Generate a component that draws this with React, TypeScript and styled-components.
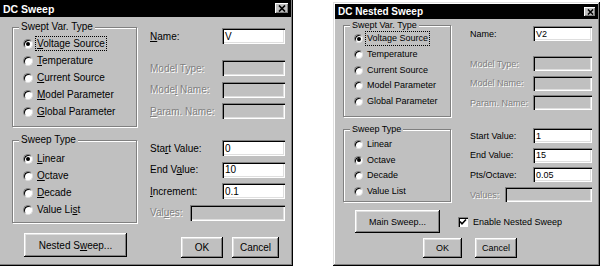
import React from 'react';
import styled, { createGlobalStyle, css } from 'styled-components';

const Global = createGlobalStyle`
  html, body { margin: 0; padding: 0; background: #fff; }
  body { width: 600px; height: 269px; overflow: hidden; font-family: "Liberation Sans", Arial, sans-serif; }
`;

const Page = styled.div`
  display: flex;
  align-items: flex-start;
  width: 600px;
  height: 269px;
  background: #fff;
  overflow: hidden;
`;

const Window = styled.div<{ $w: number; $h: number; $mt: number; $ml: number; $fs: number }>`
  flex: none;
  width: ${p => p.$w}px;
  height: ${p => p.$h}px;
  margin-top: ${p => p.$mt}px;
  margin-left: ${p => p.$ml}px;
  box-sizing: border-box;
  padding: 2px;
  background: #c0c0c0;
  box-shadow: inset -1px -1px #000, inset 1px 1px #dfdfdf, inset -2px -2px #808080, inset 2px 2px #fff;
  display: flex;
  flex-direction: column;
  font-size: ${p => p.$fs}px;
  color: #000;
`;

const TitleBar = styled.div<{ $h: number; $fs: number }>`
  flex: none;
  height: ${p => p.$h}px;
  background: #000;
  color: #fff;
  font-weight: bold;
  font-size: ${p => p.$fs}px;
  display: flex;
  align-items: center;
  justify-content: space-between;
  padding: 0 2px 0 3px;
`;

const CloseBtn = styled.div<{ $w: number; $h: number }>`
  width: ${p => p.$w}px;
  height: ${p => p.$h}px;
  background: #c0c0c0;
  box-shadow: inset -1px -1px #000, inset 1px 1px #fff, inset -2px -2px #808080;
  display: flex;
  align-items: center;
  justify-content: center;
`;

const Body = styled.div`
  display: flex;
  align-items: flex-start;
`;

const Column = styled.div<{ $w: number; $pl?: number; $pt?: number; $ml?: number }>`
  flex: none;
  width: ${p => p.$w}px;
  padding-left: ${p => p.$pl ?? 0}px;
  padding-top: ${p => p.$pt ?? 0}px;
  margin-left: ${p => p.$ml ?? 0}px;
  display: flex;
  flex-direction: column;
`;

const Group = styled.div<{ $h: number; $mt: number; $pt: number; $pl: number }>`
  position: relative;
  box-sizing: border-box;
  height: ${p => p.$h}px;
  margin-top: ${p => p.$mt}px;
  padding-top: ${p => p.$pt}px;
  padding-left: ${p => p.$pl}px;
  border: 1px solid #808080;
  box-shadow: inset 1px 1px #fff, 1px 1px #fff;
  display: flex;
  flex-direction: column;
`;

const Legend = styled.span`
  position: absolute;
  top: -7px;
  left: 6px;
  padding: 0 2px;
  background: #c0c0c0;
  line-height: 12px;
`;

const RadioRow = styled.div<{ $h: number; $gap: number }>`
  height: ${p => p.$h}px;
  display: flex;
  align-items: center;
  gap: ${p => p.$gap}px;
`;

const RadioCircle = styled.span<{ $d: number; $on?: boolean }>`
  position: relative;
  flex: none;
  box-sizing: border-box;
  width: ${p => p.$d}px;
  height: ${p => p.$d}px;
  border-radius: 50%;
  background: #fff;
  border: 1px solid;
  border-color: #808080 #dfdfdf #dfdfdf #808080;
  box-shadow: inset 1px 1px #000;
  ${p =>
    p.$on &&
    css`
      &::after {
        content: '';
        position: absolute;
        left: 50%;
        top: 50%;
        width: 4px;
        height: 4px;
        margin: -2px 0 0 -2px;
        border-radius: 50%;
        background: #000;
      }
    `}
`;

const Text = styled.span<{ $focus?: boolean }>`
  white-space: nowrap;
  padding: 0 1px;
  line-height: 13px;
  ${p =>
    p.$focus &&
    css`
      outline: 1px dotted #000;
      outline-offset: 0px;
    `}
`;

const FieldGroup = styled.div<{ $gap: number; $mt: number }>`
  display: flex;
  flex-direction: column;
  gap: ${p => p.$gap}px;
  margin-top: ${p => p.$mt}px;
`;

const Field = styled.div<{ $h: number }>`
  display: flex;
  align-items: center;
  height: ${p => p.$h}px;
`;

const Label = styled.span<{ $w: number; $disabled?: boolean }>`
  flex: none;
  width: ${p => p.$w}px;
  white-space: nowrap;
  color: ${p => (p.$disabled ? '#808080' : '#000')};
  text-shadow: ${p => (p.$disabled ? '1px 1px 0 #fff' : 'none')};
`;

const Input = styled.div<{ $w: number; $disabled?: boolean }>`
  flex: none;
  box-sizing: border-box;
  width: ${p => p.$w}px;
  height: 100%;
  padding-left: 3px;
  display: flex;
  align-items: center;
  background: ${p => (p.$disabled ? '#c0c0c0' : '#fff')};
  box-shadow: inset 1px 1px #808080, inset 2px 2px #000, inset -1px -1px #fff, inset -2px -2px #dfdfdf;
`;

const ButtonRow = styled.div<{ $mt: number; $pl: number; $gap: number }>`
  display: flex;
  align-items: center;
  margin-top: ${p => p.$mt}px;
  padding-left: ${p => p.$pl}px;
  gap: ${p => p.$gap}px;
`;

const Button = styled.div<{ $w: number; $h: number }>`
  flex: none;
  box-sizing: border-box;
  width: ${p => p.$w}px;
  height: ${p => p.$h}px;
  background: #c0c0c0;
  box-shadow: inset -1px -1px #000, inset 1px 1px #fff, inset -2px -2px #808080, inset 2px 2px #dfdfdf;
  display: flex;
  align-items: center;
  justify-content: center;
  white-space: nowrap;
`;

const CheckRow = styled.div`
  display: flex;
  align-items: center;
  gap: 5px;
`;

const CheckBox = styled.span`
  flex: none;
  box-sizing: border-box;
  width: 10px;
  height: 10px;
  background: #fff;
  box-shadow: inset 1px 1px #808080, inset 2px 2px #000, inset -1px -1px #fff;
  display: flex;
  align-items: center;
  justify-content: center;
`;

const CloseIcon = ({ s }: { s: number }) => (
  <svg width={s} height={s - 1} viewBox="0 0 8 7">
    <path d="M1 0.5 L7 6.5 M7 0.5 L1 6.5" stroke="#000" strokeWidth="1.7" fill="none" />
  </svg>
);

const CheckIcon = () => (
  <svg width="8" height="8" viewBox="0 0 8 8">
    <path d="M1 3.5 L3 5.8 L7 1.5" stroke="#000" strokeWidth="1.6" fill="none" />
  </svg>
);

type Radio = { label: React.ReactNode; on?: boolean; focus?: boolean };

const RadioList = ({ items, d, h, gap }: { items: Radio[]; d: number; h: number; gap: number }) => (
  <>
    {items.map((r, i) => (
      <RadioRow key={i} $h={h} $gap={gap}>
        <RadioCircle $d={d} $on={r.on} />
        <Text $focus={r.focus}>{r.label}</Text>
      </RadioRow>
    ))}
  </>
);

type FieldDef = { label: React.ReactNode; value?: string; disabled?: boolean; lw?: number; iw?: number };

const Fields = ({ items, h, gap, mt, lw, iw }: { items: FieldDef[]; h: number; gap: number; mt: number; lw: number; iw: number }) => (
  <FieldGroup $gap={gap} $mt={mt}>
    {items.map((f, i) => (
      <Field key={i} $h={h}>
        <Label $w={f.lw ?? lw} $disabled={f.disabled}>{f.label}</Label>
        <Input $w={f.iw ?? iw} $disabled={f.disabled}>{f.value}</Input>
      </Field>
    ))}
  </FieldGroup>
);

const DCSweep = () => (
  <Window $w={295} $h={268} $mt={-2} $ml={-2} $fs={10}>
    <TitleBar $h={17} $fs={10.5}>
      <span>DC Sweep</span>
      <CloseBtn $w={14} $h={11}>
        <CloseIcon s={8} />
      </CloseBtn>
    </TitleBar>
    <Body>
      <Column $w={125} $pl={12}>
        <Group $h={100} $mt={10} $pt={7} $pl={10}>
          <Legend>Swept Var. Type</Legend>
          <RadioList
            d={10}
            h={17}
            gap={3}
            items={[
              { label: <><u>V</u>oltage Source</>, on: true, focus: true },
              { label: <><u>T</u>emperature</> },
              { label: <><u>C</u>urrent Source</> },
              { label: <><u>M</u>odel Parameter</> },
              { label: <><u>G</u>lobal Parameter</> },
            ]}
          />
        </Group>
        <Group $h={83} $mt={13} $pt={9} $pl={10}>
          <Legend>Sweep Type</Legend>
          <RadioList
            d={10}
            h={17}
            gap={3}
            items={[
              { label: <><u>L</u>inear</>, on: true },
              { label: <><u>O</u>ctave</> },
              { label: <><u>D</u>ecade</> },
              { label: <>Value Li<u>s</u>t</> },
            ]}
          />
        </Group>
        <ButtonRow $mt={10} $pl={12} $gap={0}>
          <Button $w={103} $h={24}>Nested S<u>w</u>eep...</Button>
        </ButtonRow>
      </Column>
      <Column $w={135} $ml={13} $pt={11}>
        <Fields h={16} gap={5.5} mt={0} lw={72} iw={63} items={[{ label: <><u>N</u>ame:</>, value: 'V' }]} />
        <Fields
          h={16}
          gap={5.5}
          mt={16}
          lw={72}
          iw={63}
          items={[
            { label: 'Model Type:', disabled: true },
            { label: <>Mode<u>l</u> Name:</>, disabled: true },
            { label: <><u>P</u>aram. Name:</>, disabled: true },
          ]}
        />
        <Fields
          h={16}
          gap={5.5}
          mt={21}
          lw={72}
          iw={63}
          items={[
            { label: <>Sta<u>r</u>t Value:</>, value: '0' },
            { label: <>End V<u>a</u>lue:</>, value: '10' },
            { label: <><u>I</u>ncrement:</>, value: '0.1' },
            { label: <>Val<u>u</u>es:</>, disabled: true, lw: 40, iw: 95 },
          ]}
        />
        <ButtonRow $mt={16} $pl={31} $gap={9}>
          <Button $w={42} $h={21}>OK</Button>
          <Button $w={47} $h={21}>Cancel</Button>
        </ButtonRow>
      </Column>
    </Body>
  </Window>
);

const DCNestedSweep = () => (
  <Window $w={267} $h={264} $mt={2} $ml={40} $fs={9}>
    <TitleBar $h={15} $fs={10}>
      <span>DC Nested Sweep</span>
      <CloseBtn $w={12} $h={10}>
        <CloseIcon s={7} />
      </CloseBtn>
    </TitleBar>
    <Body>
      <Column $w={108} $pl={8}>
        <Group $h={92} $mt={6} $pt={5} $pl={10}>
          <Legend>Swept Var. Type</Legend>
          <RadioList
            d={9}
            h={15.7}
            gap={3}
            items={[
              { label: 'Voltage Source', on: true, focus: true },
              { label: 'Temperature' },
              { label: 'Current Source' },
              { label: 'Model Parameter' },
              { label: 'Global Parameter' },
            ]}
          />
        </Group>
        <Group $h={73} $mt={12} $pt={7} $pl={10}>
          <Legend>Sweep Type</Legend>
          <RadioList
            d={9}
            h={15.5}
            gap={3}
            items={[
              { label: 'Linear' },
              { label: 'Octave', on: true },
              { label: 'Decade' },
              { label: 'Value List' },
            ]}
          />
        </Group>
      </Column>
      <Column $w={122} $ml={19} $pt={7}>
        <Fields h={15} gap={4.5} mt={0} lw={63} iw={59} items={[{ label: 'Name:', value: 'V2' }]} />
        <Fields
          h={15}
          gap={4.5}
          mt={15}
          lw={63}
          iw={59}
          items={[
            { label: 'Model Type:', disabled: true },
            { label: 'Model Name:', disabled: true },
            { label: 'Param. Name:', disabled: true },
          ]}
        />
        <Fields
          h={15}
          gap={4.7}
          mt={18}
          lw={63}
          iw={59}
          items={[
            { label: 'Start Value:', value: '1' },
            { label: 'End Value:', value: '15' },
            { label: 'Pts/Octave:', value: '0.05' },
            { label: 'Values:', disabled: true, lw: 35, iw: 87 },
          ]}
        />
      </Column>
    </Body>
    <ButtonRow $mt={8} $pl={20} $gap={18}>
      <Button $w={85} $h={23}>Main Sweep...</Button>
      <CheckRow>
        <CheckBox>
          <CheckIcon />
        </CheckBox>
        <span>Enable Nested Sweep</span>
      </CheckRow>
    </ButtonRow>
    <ButtonRow $mt={5} $pl={88} $gap={13}>
      <Button $w={39} $h={20}>OK</Button>
      <Button $w={42} $h={20}>Cancel</Button>
    </ButtonRow>
  </Window>
);

export default function App() {
  return (
    <>
      <Global />
      <Page>
        <DCSweep />
        <DCNestedSweep />
      </Page>
    </>
  );
}
